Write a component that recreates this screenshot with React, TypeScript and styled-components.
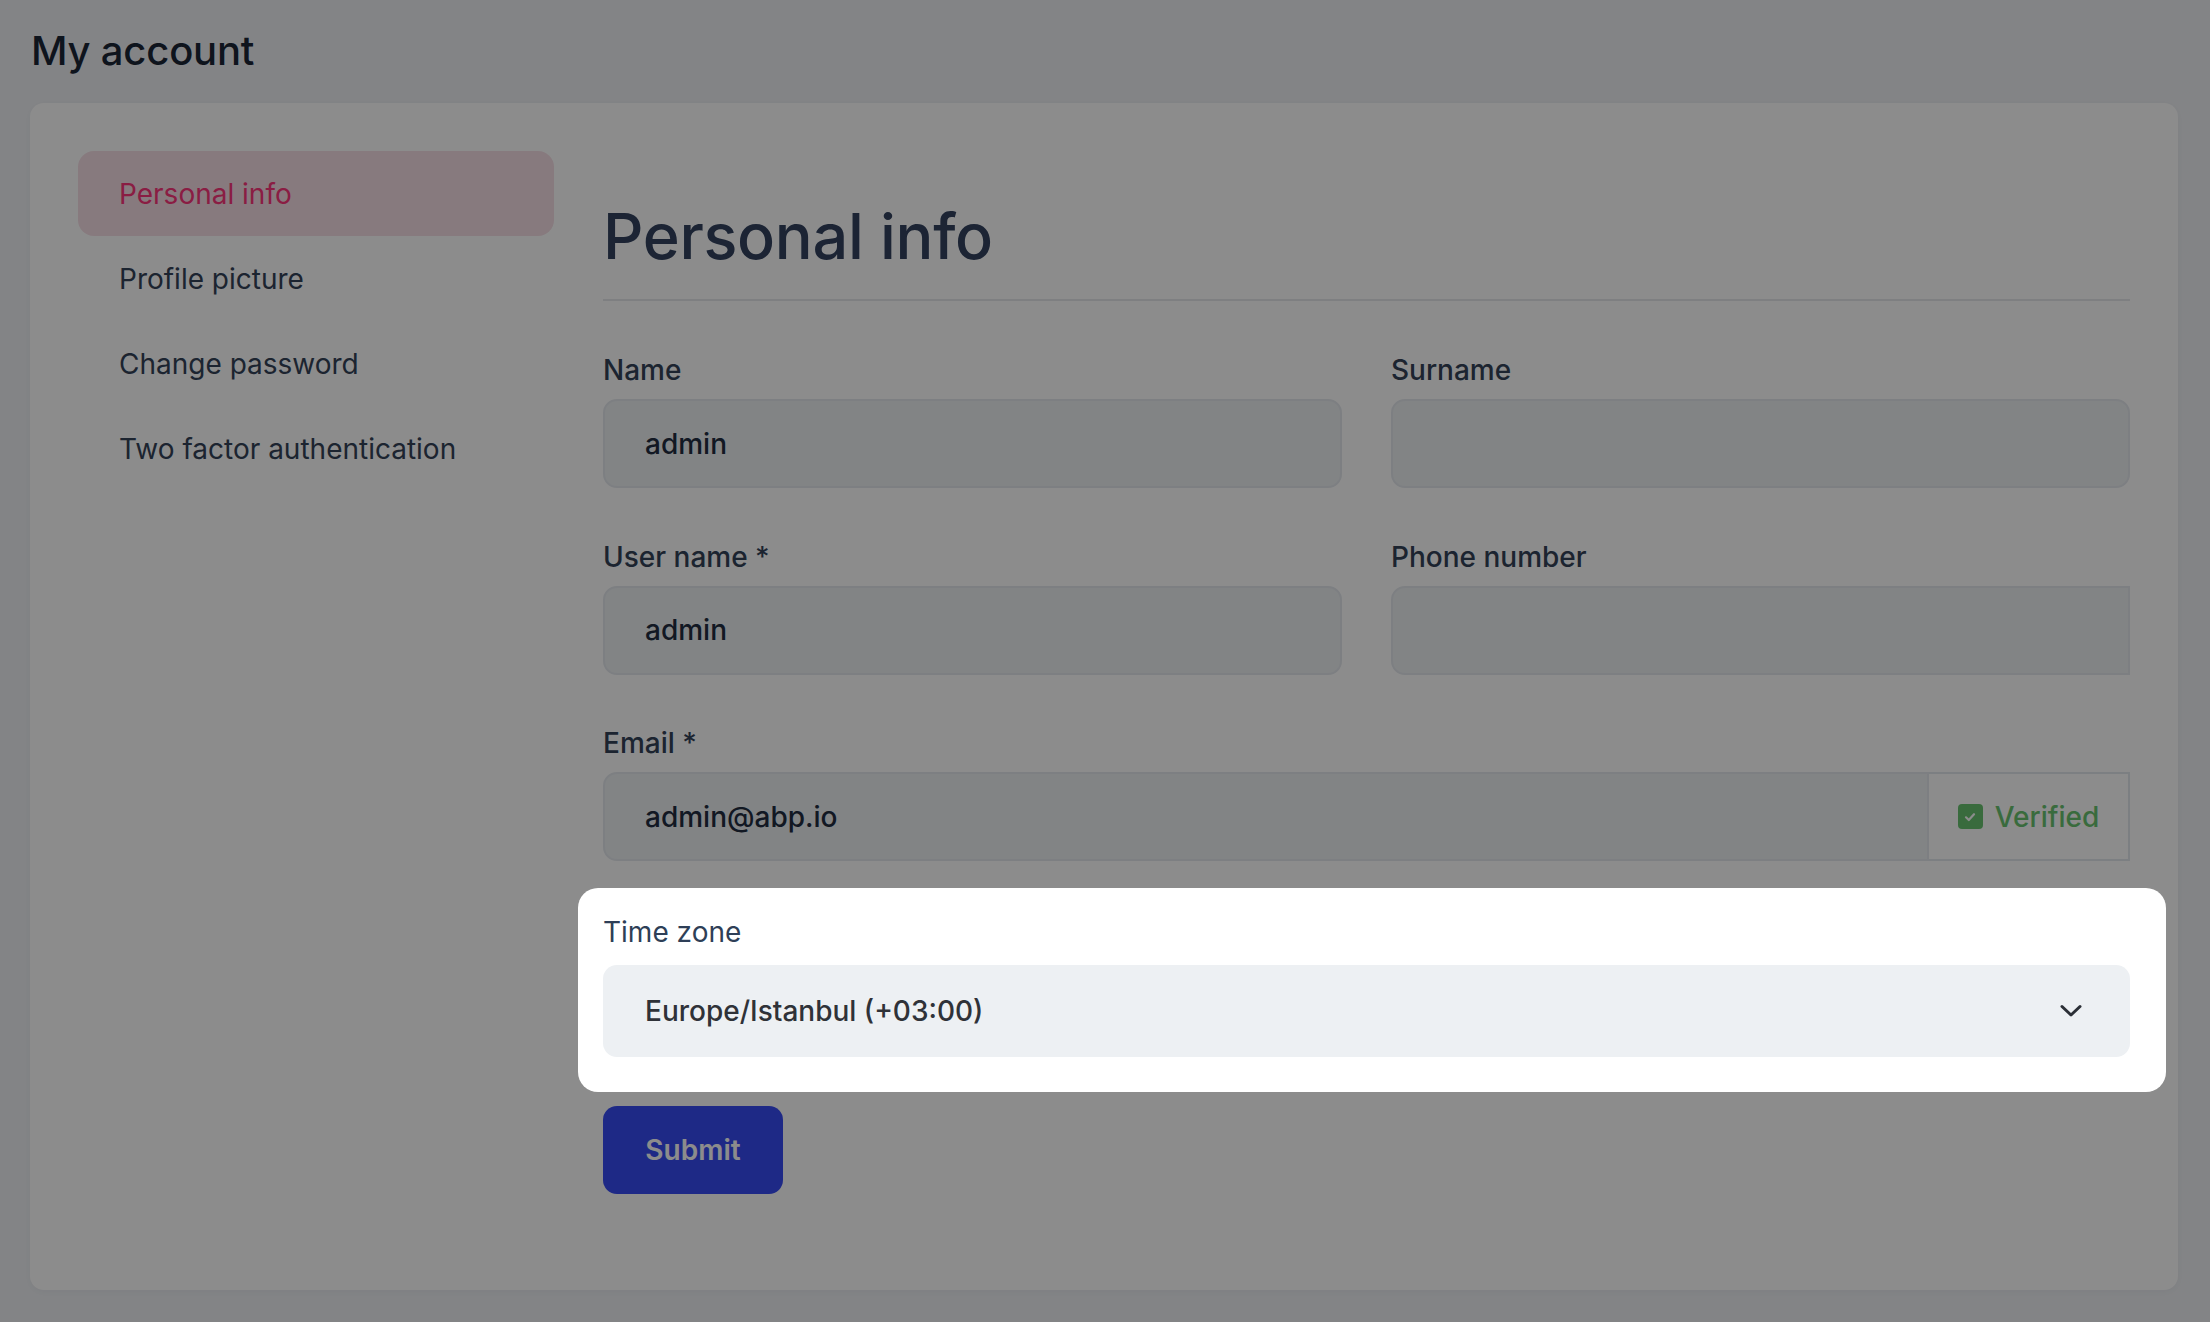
import React from "react";
import styled, { createGlobalStyle } from "styled-components";

const Global = createGlobalStyle`
  html, body { margin: 0; padding: 0; }
  body {
    background: #eff1f5;
    font-family: Inter, "Noto Sans", "Liberation Sans", sans-serif;
    color: #1f2a3c;
    min-height: 100vh;
  }
  * { box-sizing: border-box; }
`;

const Page = styled.div`
  padding: 0 32px 34px 30px;
`;

const PageTitle = styled.h1`
  margin: 0;
  padding: 21px 0 22px 1px;
  font-size: 40px;
  line-height: 60px;
  font-weight: 500;
  color: #1a2536;
  letter-spacing: -0.2px;
`;

const Card = styled.div`
  background: #ffffff;
  border-radius: 14px;
  box-shadow: 0 2px 10px rgba(20, 30, 50, 0.04);
  padding: 48px 48px 96px 48px;
  display: flex;
  gap: 49px;
  min-height: 1185px;
`;

const Sidebar = styled.nav`
  width: 476px;
  flex-shrink: 0;
  display: flex;
  flex-direction: column;
`;

const NavItem = styled.div<{ $active?: boolean }>`
  height: 85px;
  display: flex;
  align-items: center;
  padding-left: 41px;
  border-radius: 16px;
  font-size: 28px;
  font-weight: 400;
  color: ${(p) => (p.$active ? "#fb357b" : "#334258")};
  background: ${(p) => (p.$active ? "#f6dfe6" : "transparent")};
`;

const Form = styled.div`
  flex: 1;
  display: flex;
  flex-direction: column;
`;

const Heading = styled.h2`
  margin: 46px 0 0 0;
  padding-bottom: 24px;
  border-bottom: 2px solid #e6e8ec;
  font-size: 63px;
  line-height: 78px;
  font-weight: 500;
  color: #334360;
  letter-spacing: -0.3px;
`;

const Grid = styled.div`
  display: grid;
  grid-template-columns: 1fr 1fr;
  column-gap: 49px;
  margin-top: 48px;
`;

const Field = styled.div<{ $span?: boolean }>`
  grid-column: ${(p) => (p.$span ? "1 / span 2" : "auto")};
  margin-bottom: 47.5px;
`;

const Label = styled.div<{ $light?: boolean }>`
  font-size: 28px;
  line-height: 42px;
  font-weight: ${(p) => (p.$light ? 400 : 500)};
  color: ${(p) => (p.$light ? "#2e3f57" : "#334258")};
  margin-bottom: ${(p) => (p.$light ? "12px" : "8px")};
`;

const Input = styled.div<{ $flatRight?: boolean }>`
  height: 89px;
  background: #edf0f3;
  border: 2px solid #e4e8ed;
  border-radius: ${(p) => (p.$flatRight ? "14px 0 0 14px" : "14px")};
  display: flex;
  align-items: center;
  padding-left: 40px;
  font-size: 28px;
  font-weight: 500;
  color: #222d40;
  flex: 1;
`;

const InputGroup = styled.div`
  display: flex;
`;

const Addon = styled.div`
  width: 201px;
  height: 89px;
  border: 2px solid #e2e7ed;
  border-left: none;
  background: #ffffff;
  display: flex;
  align-items: center;
  justify-content: center;
  gap: 12px;
  font-size: 28px;
  font-weight: 500;
  color: #68c470;
`;

const CheckBox = styled.span`
  width: 25px;
  height: 25px;
  border-radius: 4px;
  background: #68c470;
  display: inline-flex;
  align-items: center;
  justify-content: center;
`;

const Spotlight = styled.div`
  position: relative;
  z-index: 20;
  background: #ffffff;
  border-radius: 20px;
  margin: -21px -36px 14px -25px;
  padding: 23px 36px 35px 25px;
`;

const Select = styled.div`
  height: 92px;
  background: #edf0f3;
  border-radius: 14px;
  display: flex;
  align-items: center;
  justify-content: space-between;
  padding: 0 48px 0 42px;
  font-size: 28px;
  font-weight: 500;
  color: #2f3238;
`;

const SubmitButton = styled.button`
  align-self: flex-start;
  width: 180px;
  height: 88px;
  border: none;
  border-radius: 14px;
  background: #384cf4;
  color: #ffffff;
  font-family: inherit;
  font-size: 28px;
  font-weight: 600;
  box-shadow: 0 0 0 14px rgba(255, 255, 255, 0.02);
`;

const Overlay = styled.div`
  position: fixed;
  inset: 0;
  background: rgba(0, 0, 0, 0.45);
  z-index: 10;
`;

const Chevron = () => (
  <svg width="22" height="14" viewBox="0 0 22 14" fill="none">
    <path d="M2 2.5 L11 11 L20 2.5" stroke="#2b2f36" strokeWidth="3" strokeLinecap="round" strokeLinejoin="round" />
  </svg>
);

const Check = () => (
  <svg width="16" height="16" viewBox="0 0 16 16" fill="none">
    <path d="M4 8.3 L6.8 11 L12 5.2" stroke="#ffffff" strokeWidth="2.2" strokeLinecap="round" strokeLinejoin="round" />
  </svg>
);

const navItems = ["Personal info", "Profile picture", "Change password", "Two factor authentication"];

export default function App() {
  return (
    <>
      <Global />
      <Page>
        <PageTitle>My account</PageTitle>
        <Card>
          <Sidebar>
            {navItems.map((n, i) => (
              <NavItem key={n} $active={i === 0}>
                {n}
              </NavItem>
            ))}
          </Sidebar>
          <Form>
            <Heading>Personal info</Heading>
            <Grid>
              <Field>
                <Label>Name</Label>
                <Input>admin</Input>
              </Field>
              <Field>
                <Label>Surname</Label>
                <Input />
              </Field>
              <Field>
                <Label>User name *</Label>
                <Input>admin</Input>
              </Field>
              <Field>
                <Label>Phone number</Label>
                <Input $flatRight />
              </Field>
              <Field $span>
                <Label>Email *</Label>
                <InputGroup>
                  <Input $flatRight>admin@abp.io</Input>
                  <Addon>
                    <CheckBox>
                      <Check />
                    </CheckBox>
                    Verified
                  </Addon>
                </InputGroup>
              </Field>
            </Grid>
            <Spotlight>
              <Label $light>Time zone</Label>
              <Select>
                <span>Europe/Istanbul (+03:00)</span>
                <Chevron />
              </Select>
            </Spotlight>
            <SubmitButton>Submit</SubmitButton>
          </Form>
        </Card>
      </Page>
      <Overlay />
    </>
  );
}
